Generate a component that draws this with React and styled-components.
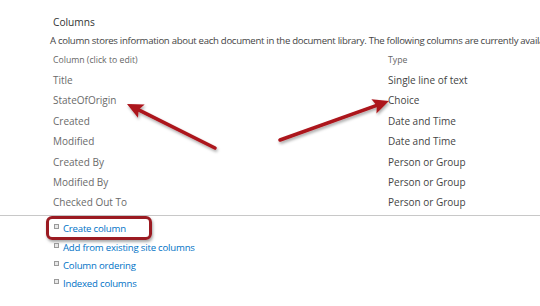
import React from "react";
import styled, { createGlobalStyle } from "styled-components";

const Global = createGlobalStyle`
  html, body { margin: 0; padding: 0; background: #fff; overflow: hidden; }
  body { font-family: "Open Sans", "Noto Sans", sans-serif; }
`;

const Page = styled.div`
  position: relative;
  width: 540px;
  height: 306px;
  overflow: hidden;
  background: #fff;
`;

const Section = styled.div`
  padding: 14px 0 0 53px;
`;

const Heading = styled.div`
  font-size: 10.2px;
  color: #333;
  line-height: 17px;
`;

const Description = styled.div`
  margin: 1px 0 0 -3px;
  font-size: 9.6px;
  letter-spacing: -0.3px;
  color: #444;
  line-height: 17px;
  white-space: nowrap;
`;

const Table = styled.div`
  display: grid;
  grid-template-columns: 335px 1fr;
  margin-top: 2px;
`;

const HeadCell = styled.div`
  font-size: 8.7px;
  color: #666;
  line-height: 16px;
  height: 18px;
  padding-top: 1px;
`;

const Cell = styled.div`
  font-size: 10px;
  color: ${(p) => (p.$type ? "#444" : "#6a6a6a")};
  line-height: 20.4px;
  height: 20.4px;
  white-space: nowrap;
`;

const Rule = styled.div`
  height: 1px;
  background: #c8c8c8;
  margin-top: 2px;
`;

const Links = styled.ul`
  list-style: none;
  margin: 4px 0 0;
  padding: 0 0 0 54px;
`;

const LinkItem = styled.li`
  position: relative;
  display: flex;
  align-items: center;
  gap: 4px;
  height: 18.3px;
  font-size: 9.6px;
  letter-spacing: -0.2px;
  color: #0072c6;
  white-space: nowrap;
`;

const Bullet = styled.span`
  width: 3px;
  height: 3px;
  border: 1px solid #9a9a9a;
  background: #e8e8e8;
  margin-top: -4px;
  flex: none;
`;

const Highlight = styled.span`
  position: absolute;
  left: -8px;
  top: -4px;
  width: 100px;
  height: 18px;
  border: 3px solid #9b1b22;
  border-radius: 6px;
  box-shadow: 1px 2px 3px rgba(0, 0, 0, 0.35);
  pointer-events: none;
`;

const Overlay = styled.svg`
  position: absolute;
  left: 0;
  top: 0;
  pointer-events: none;
`;

const rows = [
  ["Title", "Single line of text"],
  ["StateOfOrigin", "Choice"],
  ["Created", "Date and Time"],
  ["Modified", "Date and Time"],
  ["Created By", "Person or Group"],
  ["Modified By", "Person or Group"],
  ["Checked Out To", "Person or Group"],
];

const links = [
  "Create column",
  "Add from existing site columns",
  "Column ordering",
  "Indexed columns",
];

function Arrow({ x1, y1, x2, y2 }) {
  const dx = x2 - x1;
  const dy = y2 - y1;
  const len = Math.hypot(dx, dy);
  const ux = dx / len;
  const uy = dy / len;
  const hl = 16;
  const hw = 7.5;
  const bx = x2 - ux * hl;
  const by = y2 - uy * hl;
  const px = -uy;
  const py = ux;
  const head = `${x2},${y2} ${bx + px * hw},${by + py * hw} ${bx + ux * 3},${by + uy * 3} ${bx - px * hw},${by - py * hw}`;
  return (
    <g>
      <line x1={x1} y1={y1} x2={bx + ux * 3} y2={by + uy * 3} stroke="#ac141b" strokeWidth="3.6" strokeLinecap="round" />
      <polygon points={head} fill="#ac141b" />
    </g>
  );
}

export default function App() {
  return (
    <>
      <Global />
      <Page>
        <Section>
          <Heading>Columns</Heading>
          <Description>
            A column stores information about each document in the document library. The following columns are currently available in this document library:
          </Description>
          <Table>
            <HeadCell>Column (click to edit)</HeadCell>
            <HeadCell>Type</HeadCell>
            {rows.map(([n, t]) => (
              <React.Fragment key={n}>
                <Cell>{n}</Cell>
                <Cell $type>{t}</Cell>
              </React.Fragment>
            ))}
          </Table>
        </Section>
        <Rule />
        <Links>
          {links.map((l, i) => (
            <LinkItem key={l}>
              {i === 0 && <Highlight />}
              <Bullet />
              {l}
            </LinkItem>
          ))}
        </Links>
        <Overlay width="540" height="306" viewBox="0 0 540 306">
          <defs>
            <filter id="sh" x="-20%" y="-20%" width="140%" height="140%">
              <feDropShadow dx="1" dy="2" stdDeviation="1.5" floodColor="#000" floodOpacity="0.35" />
            </filter>
          </defs>
          <g filter="url(#sh)">
            <Arrow x1={215} y1={148} x2={127} y2={104} />
            <Arrow x1={280} y1={140} x2={389} y2={101} />
          </g>
        </Overlay>
      </Page>
    </>
  );
}
